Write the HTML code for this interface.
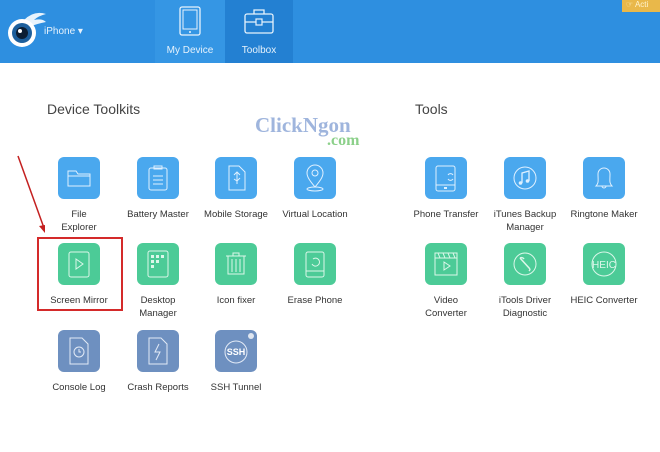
<!DOCTYPE html>
<html><head><meta charset="utf-8"><style>
*{margin:0;padding:0;box-sizing:border-box}
body{width:660px;height:452px;background:#fff;font-family:"Liberation Sans","DejaVu Sans",sans-serif;position:relative;overflow:hidden}
.hdr{position:absolute;left:0;top:0;width:660px;height:63px;background:#2e8fe0}
.tab{position:absolute;top:0;height:63px;color:#e6f2fc;font-size:10px;text-align:center}
.ic{position:absolute;width:42px;height:42px;border-radius:6px}
.b{background:#4aa8ee}.g{background:#4ccb97}.s{background:#6e90c0}
.ic svg{position:absolute;left:0;top:0}
.lb{position:absolute;width:90px;text-align:center;font-size:9.5px;color:#333;line-height:13px}
h2{position:absolute;font-weight:normal;font-size:14px;color:#444}
</style></head><body>
<div class="hdr"></div>
<svg style="position:absolute;left:4px;top:8px" width="44" height="44" viewBox="0 0 44 44">
<path d="M20 12 Q30 2 42 6 Q34 8 30 12 Q38 10 42 14 Q32 16 28 18Z" fill="#e8f3fc"/>
<circle cx="18" cy="25" r="14" fill="#fff"/><circle cx="18" cy="25" r="10" fill="#1d5f9c"/><circle cx="18" cy="25" r="6" fill="#0c1e33"/><circle cx="16" cy="23" r="2" fill="#fff"/></svg>
<div style="position:absolute;left:44px;top:26px;color:#e6f2fc;font-size:10px">iPhone ▾</div>
<div class="tab" style="left:155px;width:70px;background:#3596e4">
<svg style="position:absolute;left:24px;top:6px" width="22" height="30" viewBox="0 0 22 30"><rect x="1" y="1" width="20" height="28" rx="2" fill="none" stroke="#e6f2fc" stroke-width="1.3"/><rect x="4" y="4" width="14" height="19" fill="none" stroke="#e6f2fc" stroke-width="1"/><circle cx="11" cy="26" r="1" fill="#e6f2fc"/></svg>
<div style="position:absolute;top:45px;width:70px">My Device</div></div>
<div class="tab" style="left:225px;width:68px;background:#2380d2">
<svg style="position:absolute;left:19px;top:8px" width="30" height="26" viewBox="0 0 30 26"><rect x="1" y="6" width="28" height="19" rx="2" fill="none" stroke="#e6f2fc" stroke-width="1.3"/><path d="M10 6V2h10v4M1 14h11M18 14h11" fill="none" stroke="#e6f2fc" stroke-width="1.3"/><rect x="12" y="11" width="6" height="6" fill="none" stroke="#e6f2fc" stroke-width="1.2"/></svg>
<div style="position:absolute;top:45px;width:68px">Toolbox</div></div>
<div style="position:absolute;left:622px;top:0;width:38px;height:12px;background:#e9b84a;color:#fff4d0;font-size:8px;padding-left:4px">☞ Acti</div>

<h2 style="left:47px;top:101px">Device Toolkits</h2>
<h2 style="left:415px;top:101px">Tools</h2>
<div style="position:absolute;left:255px;top:113px;font-family:'Liberation Serif',serif;font-weight:bold;font-size:21px;color:#9fb5dd">ClickNgon</div>
<div style="position:absolute;left:327px;top:132px;font-family:'Liberation Serif',serif;font-weight:bold;font-size:16px;color:#8cd08a">.com</div>

<!-- row1 -->
<div class="ic b" style="left:58px;top:157px"><svg width="42" height="42"><path d="M10 14h8l2 3h12v12H10z M10 19h22" fill="none" stroke="#dff0ff" stroke-width="1"/></svg></div>
<div class="ic b" style="left:137px;top:157px"><svg width="42" height="42"><rect x="12" y="11" width="18" height="22" rx="2" fill="none" stroke="#dff0ff"/><path d="M17 9h8v3h-8zM16 19h10M16 23h10M16 27h10" fill="none" stroke="#dff0ff"/></svg></div>
<div class="ic b" style="left:215px;top:157px"><svg width="42" height="42"><path d="M14 9h10l6 6v18H14z" fill="none" stroke="#dff0ff"/><path d="M22 15v12M19 18l3-3 3 3M19 22l3 2 3-3" fill="none" stroke="#dff0ff"/></svg></div>
<div class="ic b" style="left:294px;top:157px"><svg width="42" height="42"><path d="M21 30c-5-6-8-10-8-14a8 8 0 0 1 16 0c0 4-3 8-8 14z" fill="none" stroke="#dff0ff"/><circle cx="21" cy="16" r="3" fill="none" stroke="#dff0ff"/><ellipse cx="21" cy="32" rx="8" ry="2" fill="none" stroke="#dff0ff"/></svg></div>
<div class="lb" style="left:34px;top:208px">File<br>Explorer</div>
<div class="lb" style="left:113px;top:208px">Battery Master</div>
<div class="lb" style="left:191px;top:208px">Mobile Storage</div>
<div class="lb" style="left:270px;top:208px">Virtual Location</div>

<div class="ic b" style="left:425px;top:157px"><svg width="42" height="42"><rect x="11" y="9" width="19" height="25" rx="2" fill="none" stroke="#dff0ff"/><path d="M11 28h19" stroke="#dff0ff"/><rect x="19" y="30" width="3" height="2" fill="#dff0ff"/><path d="M23 18a3 3 0 0 1 5 0M28 22a3 3 0 0 1-5 0" fill="none" stroke="#dff0ff"/></svg></div>
<div class="ic b" style="left:504px;top:157px"><svg width="42" height="42"><circle cx="21" cy="21" r="11" fill="none" stroke="#dff0ff"/><path d="M18 26V16l7-2v10" fill="none" stroke="#dff0ff" stroke-width="1.3"/><circle cx="16.5" cy="26" r="1.8" fill="#dff0ff"/><circle cx="23.5" cy="24" r="1.8" fill="#dff0ff"/></svg></div>
<div class="ic b" style="left:583px;top:157px"><svg width="42" height="42"><path d="M13 29c3-3 2-6 2-12a6 6 0 0 1 12 0c0 6-1 9 2 12z M19 29a2 2 0 0 0 4 0" fill="none" stroke="#dff0ff"/></svg></div>
<div class="lb" style="left:401px;top:208px">Phone Transfer</div>
<div class="lb" style="left:480px;top:208px">iTunes Backup<br>Manager</div>
<div class="lb" style="left:559px;top:208px">Ringtone Maker</div>

<!-- row2 -->
<div class="ic g" style="left:58px;top:243px"><svg width="42" height="42"><rect x="11" y="9" width="20" height="25" rx="2" fill="none" stroke="#dcf7ea"/><path d="M18 16l7 5-7 5z" fill="none" stroke="#dcf7ea"/></svg></div>
<div class="ic g" style="left:137px;top:243px"><svg width="42" height="42"><rect x="11" y="8" width="20" height="26" rx="2" fill="none" stroke="#dcf7ea"/><g fill="#dcf7ea"><rect x="14" y="12" width="3" height="3"/><rect x="19" y="12" width="3" height="3"/><rect x="24" y="12" width="3" height="3"/><rect x="14" y="17" width="3" height="3"/><rect x="19" y="17" width="3" height="3"/><rect x="14" y="22" width="3" height="3"/></g></svg></div>
<div class="ic g" style="left:215px;top:243px"><svg width="42" height="42"><path d="M11 13h20M13 13v18h16V13M18 13v-3h6v3M17 16v13M21 16v13M25 16v13" fill="none" stroke="#dcf7ea"/></svg></div>
<div class="ic g" style="left:294px;top:243px"><svg width="42" height="42"><rect x="12" y="9" width="18" height="25" rx="2" fill="none" stroke="#dcf7ea"/><path d="M12 28h18" stroke="#dcf7ea"/><path d="M19 16a4 4 0 1 1-1 5" fill="none" stroke="#dcf7ea"/></svg></div>
<div class="lb" style="left:34px;top:294px">Screen Mirror</div>
<div class="lb" style="left:113px;top:294px">Desktop<br>Manager</div>
<div class="lb" style="left:191px;top:294px">Icon fixer</div>
<div class="lb" style="left:270px;top:294px">Erase Phone</div>

<div class="ic g" style="left:425px;top:243px"><svg width="42" height="42"><rect x="10" y="10" width="22" height="22" fill="none" stroke="#dcf7ea"/><path d="M10 15h22M13 10l2 5M18 10l2 5M23 10l2 5M28 10l2 5M19 19l6 4-6 4z" fill="none" stroke="#dcf7ea"/></svg></div>
<div class="ic g" style="left:504px;top:243px"><svg width="42" height="42"><circle cx="21" cy="21" r="11" fill="none" stroke="#dcf7ea"/><path d="M16 15l10 11M16 15a3 3 0 0 1 4 1M26 26a3 3 0 0 1-1 2" fill="none" stroke="#dcf7ea" stroke-width="1.5"/></svg></div>
<div class="ic g" style="left:583px;top:243px"><svg width="42" height="42"><circle cx="21" cy="21" r="12" fill="none" stroke="#dcf7ea"/><text x="21" y="25" text-anchor="middle" font-size="10" fill="#dcf7ea" font-family="Liberation Sans">HEIC</text></svg></div>
<div class="lb" style="left:401px;top:294px">Video<br>Converter</div>
<div class="lb" style="left:480px;top:294px">iTools Driver<br>Diagnostic</div>
<div class="lb" style="left:559px;top:294px">HEIC Converter</div>

<!-- row3 -->
<div class="ic s" style="left:58px;top:330px"><svg width="42" height="42"><path d="M12 8h12l6 6v20H12z" fill="none" stroke="#e2eaf6"/><circle cx="21" cy="22" r="5" fill="none" stroke="#e2eaf6"/><path d="M21 19v3h2" fill="none" stroke="#e2eaf6"/></svg></div>
<div class="ic s" style="left:137px;top:330px"><svg width="42" height="42"><path d="M12 8h12l6 6v20H12z" fill="none" stroke="#e2eaf6"/><path d="M22 14l-4 8h5l-4 8" fill="none" stroke="#e2eaf6"/></svg></div>
<div class="ic s" style="left:215px;top:330px"><svg width="42" height="42"><circle cx="21" cy="22" r="11" fill="none" stroke="#e2eaf6"/><text x="21" y="25" text-anchor="middle" font-size="9" font-weight="bold" fill="#fff" font-family="Liberation Sans">SSH</text><circle cx="36" cy="6" r="3" fill="#dfe6f0"/></svg></div>
<div class="lb" style="left:34px;top:381px">Console Log</div>
<div class="lb" style="left:113px;top:381px">Crash Reports</div>
<div class="lb" style="left:191px;top:381px">SSH Tunnel</div>

<div style="position:absolute;left:37px;top:237px;width:86px;height:74px;border:2px solid #d42a2a"></div>
<svg style="position:absolute;left:0;top:0" width="660" height="452"><path d="M18 156L44 228" stroke="#c42020" stroke-width="1.5"/><path d="M45 233l-6-7 6-1z" fill="#c42020"/></svg>
</body></html>
